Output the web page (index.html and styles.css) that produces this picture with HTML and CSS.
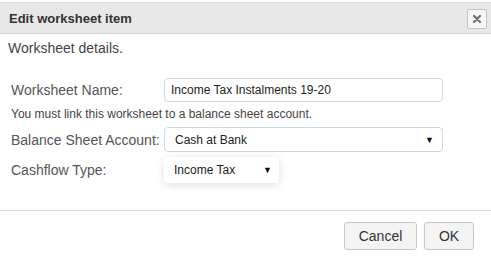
FILE: index.html
```html
<!DOCTYPE html>
<html lang="en">
<head>
    <meta charset="UTF-8">
    <title>Edit worksheet item</title>
    <link rel="stylesheet" href="styles.css">
</head>
<body>
    <div class="dialog">
        <div class="dialog-header">
            <span class="dialog-title">Edit worksheet item</span>
            <button class="close-btn" title="Close">
                <svg width="10" height="10" viewBox="0 0 10 10">
                    <path d="M2 2 L8 8 M8 2 L2 8" stroke="#777" stroke-width="2.4" stroke-linecap="round"/>
                </svg>
            </button>
        </div>
        <div class="dialog-body">
            <p class="intro">Worksheet details.</p>
            <div class="form-row">
                <label>Worksheet Name:</label>
                <input class="text-input" type="text" value="Income Tax Instalments 19-20">
            </div>
            <p class="note">You must link this worksheet to a balance sheet account.</p>
            <div class="form-row">
                <label>Balance Sheet Account:</label>
                <div class="select wide">
                    <span>Cash at Bank</span>
                    <span class="arrow">&#9660;</span>
                </div>
            </div>
            <div class="form-row">
                <label>Cashflow Type:</label>
                <div class="select compact">
                    <span>Income Tax</span>
                    <span class="arrow">&#9660;</span>
                </div>
            </div>
        </div>
        <div class="dialog-footer">
            <button class="btn cancel">Cancel</button>
            <button class="btn ok">OK</button>
        </div>
    </div>
</body>
</html>
```

FILE: styles.css
```css
body {
    font-family: "Liberation Sans", Arial, sans-serif;
    background: #fff;
    margin: 0;
    padding: 0;
    color: #333;
}
.dialog {
    padding-top: 2px;
}
.dialog-header {
    display: flex;
    align-items: center;
    justify-content: space-between;
    height: 30px;
    background: #e8e8e8;
    border-top: 1px solid #dcdcdc;
    border-bottom: 1px solid #d2d2d2;
    padding: 0 4px 0 9px;
}
.dialog-title {
    font-size: 13px;
    font-weight: bold;
    color: #333;
}
.close-btn {
    display: flex;
    align-items: center;
    justify-content: center;
    width: 20px;
    height: 20px;
    padding: 0;
    margin-top: 1px;
    border: 1px solid #c4c4c4;
    border-radius: 2px;
    background: #f6f6f6;
}
.dialog-body {
    padding: 4px 0 0 0;
    height: 172px;
}
.intro {
    margin: 0 0 20px 8px;
    font-size: 14px;
    line-height: 20px;
    color: #444;
}
.form-row {
    display: grid;
    grid-template-columns: 153px auto;
    align-items: center;
    padding-left: 11px;
    margin-bottom: 5px;
}
.form-row label {
    font-size: 14px;
    color: #555;
}
.text-input {
    box-sizing: border-box;
    width: 279px;
    height: 24px;
    border: 1px solid #cbd9e6;
    border-radius: 4px;
    padding: 0 6px;
    font-family: inherit;
    font-size: 12px;
    color: #222;
    outline: none;
}
.note {
    margin: -1px 0 5px 11px;
    font-size: 12px;
    line-height: 16px;
    color: #444;
}
.select {
    box-sizing: border-box;
    display: flex;
    align-items: center;
    justify-content: space-between;
    font-size: 12px;
    color: #222;
    background: #fff;
    border-radius: 4px;
}
.select.wide {
    width: 279px;
    height: 25px;
    border: 1px solid #cbd9e6;
    padding: 0 8px 0 10px;
}
.select.compact {
    width: 115px;
    height: 26px;
    padding: 0 7px 0 10px;
    box-shadow: 0 2px 10px rgba(0,0,0,0.12);
}
.arrow {
    font-size: 9px;
    color: #111;
}
.dialog-footer {
    display: flex;
    justify-content: flex-end;
    gap: 7px;
    border-top: 1px solid #dadada;
    padding: 11px 17px 0 0;
}
.btn {
    height: 28px;
    border: 1px solid #c8c8c8;
    border-radius: 3px;
    background: #f4f4f4;
    font-family: inherit;
    font-size: 14px;
    color: #333;
}
.btn.cancel { width: 73px; }
.btn.ok { width: 50px; }
```
